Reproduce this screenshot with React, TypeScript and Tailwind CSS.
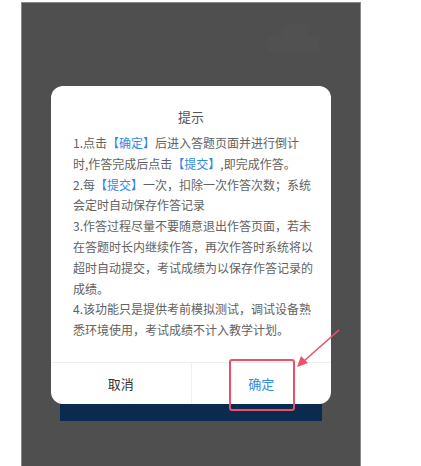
import React from "react";

const font = { fontFamily: '"Noto Sans CJK SC", "Noto Sans", sans-serif' };

function Blue({ children }: { children: React.ReactNode }) {
  return <span className="text-[#2f8be0]">{children}</span>;
}

const lines: React.ReactNode[] = [
  <>1.点击<Blue>【确定】</Blue>后进入答题页面并进行倒计</>,
  <>时,作答完成后点击<Blue>【提交】</Blue>,即完成作答。</>,
  <>2.每<Blue>【提交】</Blue>一次，扣除一次作答次数；系统</>,
  <>会定时自动保存作答记录</>,
  <>3.作答过程尽量不要随意退出作答页面，若未</>,
  <>在答题时长内继续作答，再次作答时系统将以</>,
  <>超时自动提交，考试成绩为以保存作答记录的</>,
  <>成绩。</>,
  <>4.该功能只是提供考前模拟测试，调试设备熟</>,
  <>悉环境使用，考试成绩不计入教学计划。</>,
];

export default function App() {
  return (
    <div
      className="relative h-[466px] w-[421px] overflow-hidden bg-white"
      style={font}
    >
      <div className="ml-[21px] mt-[2px] h-[470px] w-[340px] border-x border-t border-[#8a8a8a] bg-[#4f4f4f]">
        {/* faint page content under the mask */}
        <div className="ml-[260px] mt-[22px] h-[12px] w-[26px] rounded-sm bg-[#515151]" />
        <div className="ml-[246px] h-[14px] w-[50px] bg-[#515151]" />

        <div className="mx-[29px] mt-[35px] w-[280px]">
          <div className="rounded-[12px] bg-white">
            <div className="px-[22px] pt-[21px] pb-[21px]">
              <div className="text-center text-[13px] leading-[20px] text-[#555]">
                提示
              </div>
              <div className="mt-[6px] text-[12px] leading-[20.8px] text-[#626262]">
                {lines.map((l, i) => (
                  <div key={i} className="whitespace-nowrap">
                    {l}
                  </div>
                ))}
              </div>
            </div>
            <div className="flex h-[42px] border-t border-[#efefef]">
              <div className="flex flex-1 items-center justify-center border-r border-[#efefef] text-[13px] text-[#333]">
                取消
              </div>
              <div className="flex flex-1 items-center justify-center text-[13px] text-[#2f8be0]">
                确定
              </div>
            </div>
          </div>
          <div className="mx-[9px] h-[17px] bg-[#0b2a4f]" />
        </div>
      </div>

      {/* annotation */}
      <div className="absolute left-[229px] top-[359px] h-[52px] w-[66px] rounded-[3px] border-2 border-[#e8526a]" />
      <svg
        className="absolute left-0 top-0"
        width="421"
        height="466"
        viewBox="0 0 421 466"
      >
        <line
          x1="339"
          y1="330"
          x2="304"
          y2="361"
          stroke="#e8526a"
          strokeWidth="1.6"
        />
        <polygon points="297,367 301,356 308,363" fill="#e8526a" />
      </svg>
    </div>
  );
}
